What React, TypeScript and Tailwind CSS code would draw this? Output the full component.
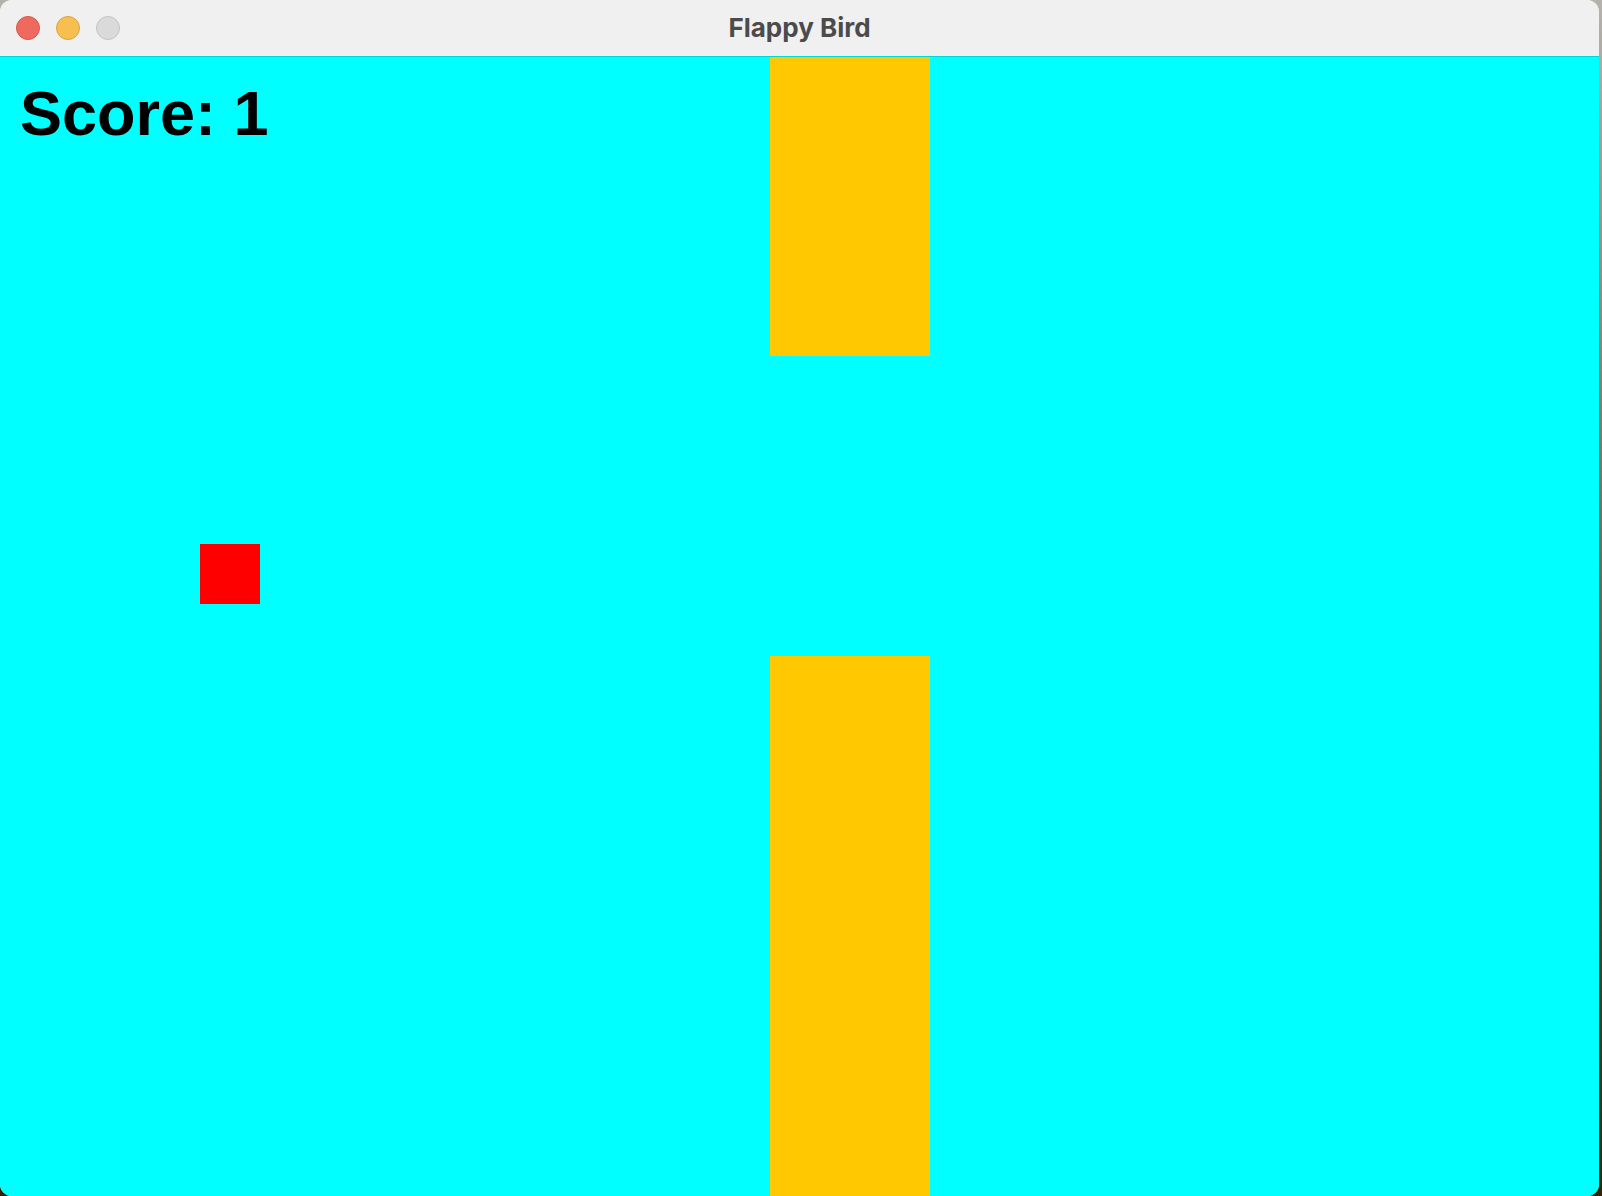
export default function App() {
  return (
    <div className="h-[1196px] w-[1602px] overflow-hidden bg-gradient-to-b from-[#b4b2ac] via-[#6e6650] to-[#2e2408]">
      <div className="flex h-full w-[1599px] flex-col overflow-hidden rounded-[12px] bg-[#f0f0f0]">
        {/* Title bar */}
        <div className="relative flex h-[57px] shrink-0 items-center justify-center border-b border-[#00d8d8] bg-[#f0f0f0]">
          <div className="absolute top-[16px] left-[16px] flex gap-[16px]">
            <span className="h-[24px] w-[24px] rounded-full border border-[#d5564c] bg-[#ee6a5f]" />
            <span className="h-[24px] w-[24px] rounded-full border border-[#d9a440] bg-[#f6bf50]" />
            <span className="h-[24px] w-[24px] rounded-full border border-[#c4c4c4] bg-[#dadada]" />
          </div>
          <span className="font-['Inter',sans-serif] text-[26px] leading-none font-bold text-[#4b4b4b]">
            Flappy Bird
          </span>
        </div>

        {/* Game canvas */}
        <div className="relative flex-1 bg-[#00ffff]">
          <div className="absolute top-0 left-[770px] h-[299px] w-[160px] bg-[#ffc800]" />
          <div className="absolute top-[599px] bottom-0 left-[770px] w-[160px] bg-[#ffc800]" />
          <div className="absolute top-[487px] left-[200px] h-[60px] w-[60px] bg-[#ff0000]" />
          <div className="absolute top-[25px] left-[20px] font-['Liberation_Sans',Arial,sans-serif] text-[63px] leading-none font-bold text-black">
            Score: 1
          </div>
        </div>
      </div>
    </div>
  );
}
